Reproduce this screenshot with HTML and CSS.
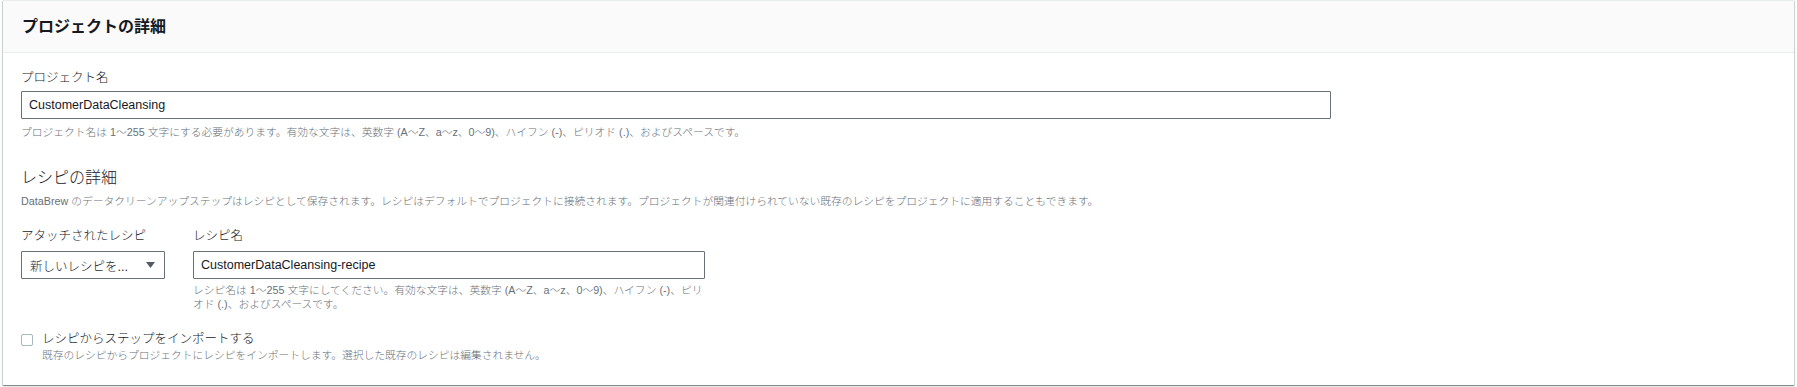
FILE: index.html
```html
<!DOCTYPE html>
<html lang="ja">
<head>
<meta charset="utf-8">
<title>プロジェクトの詳細</title>
<link rel="stylesheet" href="styles.css">
</head>
<body>
<div class="card">
  <div class="card-header">
    <h2 class="card-title">プロジェクトの詳細</h2>
  </div>
  <div class="card-body">
    <div class="field">
      <div class="label">プロジェクト名</div>
      <div class="input input-wide">CustomerDataCleansing</div>
      <div class="help">プロジェクト名は 1〜255 文字にする必要があります。有効な文字は、英数字 (A〜Z、a〜z、0〜9)、ハイフン (-)、ピリオド (.)、およびスペースです。</div>
    </div>

    <h3 class="section-title">レシピの詳細</h3>
    <div class="section-desc">DataBrew のデータクリーンアップステップはレシピとして保存されます。レシピはデフォルトでプロジェクトに接続されます。プロジェクトが関連付けられていない既存のレシピをプロジェクトに適用することもできます。</div>

    <div class="recipe-row">
      <div class="col-select">
        <div class="label">アタッチされたレシピ</div>
        <div class="select">
          <span class="select-text">新しいレシピを...</span>
          <svg class="caret" width="9" height="6" viewBox="0 0 9 6"><path d="M0 0 H9 L4.5 6 Z" fill="#545b64"/></svg>
        </div>
      </div>
      <div class="col-name">
        <div class="label">レシピ名</div>
        <div class="input">CustomerDataCleansing-recipe</div>
        <div class="help help-recipe">レシピ名は 1〜255 文字にしてください。有効な文字は、英数字 (A〜Z、a〜z、0〜9)、ハイフン (-)、ピリオド (.)、およびスペースです。</div>
      </div>
    </div>

    <div class="check">
      <span class="box"></span>
      <div class="check-text">
        <div class="check-label">レシピからステップをインポートする</div>
        <div class="check-desc">既存のレシピからプロジェクトにレシピをインポートします。選択した既存のレシピは編集されません。</div>
      </div>
    </div>
  </div>
</div>
</body>
</html>
```

FILE: styles.css
```css
* { box-sizing: border-box; }

html, body {
  margin: 0;
  padding: 0;
  background: #ffffff;
}

body {
  font-family: "Liberation Sans", "Noto Sans CJK JP", sans-serif;
  color: #16191f;
  padding: 0 3px 2px 3px;
}

.card {
  background: #ffffff;
  border-top: 1px solid #eaeded;
  box-shadow: 0 1px 1px 0 rgba(0, 28, 36, 0.3), 1px 1px 1px 0 rgba(0, 28, 36, 0.15), -1px 1px 1px 0 rgba(0, 28, 36, 0.15);
}

.card-header {
  height: 52px;
  background: #fafafa;
  border-bottom: 1px solid #eaeded;
  display: flex;
  align-items: center;
  padding: 0 19px;
}

.card-title {
  margin: 0;
  font-size: 16px;
  line-height: 20px;
  font-weight: 700;
  color: #16191f;
}

.card-body {
  padding: 16px 18px 23px 18px;
}

.label {
  font-size: 12.5px;
  line-height: 19px;
  font-weight: 300;
  color: #16191f;
}

.input {
  margin-top: 3px;
  height: 28px;
  border: 1px solid #687078;
  border-radius: 1px;
  display: flex;
  align-items: center;
  padding: 0 7px;
  font-size: 12.5px;
  font-weight: 300;
  color: #16191f;
  background: #ffffff;
}

.input-wide {
  width: 1310px;
}

.help {
  margin-top: 6px;
  font-size: 10.75px;
  line-height: 14px;
  font-weight: 300;
  color: #687078;
}

.section-title {
  margin: 29px 0 0 0;
  font-size: 16px;
  line-height: 20px;
  font-weight: 300;
  color: #16191f;
}

.section-desc {
  margin-top: 6px;
  font-size: 10.75px;
  line-height: 14px;
  font-weight: 300;
  color: #687078;
}

.recipe-row {
  margin-top: 19px;
  display: grid;
  grid-template-columns: 144px 512px;
  column-gap: 28px;
  align-items: start;
}

.col-select .select,
.col-name .input {
  margin-top: 5px;
}

.select {
  height: 28px;
  border: 1px solid #687078;
  border-radius: 1px;
  display: flex;
  align-items: center;
  justify-content: space-between;
  padding: 0 9px 0 8px;
  font-size: 12.5px;
  font-weight: 300;
  color: #16191f;
}

.select-text {
  letter-spacing: 0;
}

.caret {
  display: block;
}

.help-recipe {
  margin-top: 4px;
}

.check {
  margin-top: 20px;
  display: flex;
  align-items: flex-start;
}

.box {
  flex: none;
  width: 12px;
  height: 12px;
  margin-top: 3px;
  border: 1px solid #aab7b8;
  border-radius: 2px;
  background: #ffffff;
}

.check-text {
  margin-left: 9px;
}

.check-label {
  font-size: 12.5px;
  line-height: 17px;
  font-weight: 300;
  color: #16191f;
}

.check-desc {
  font-size: 10.75px;
  line-height: 14px;
  font-weight: 300;
  color: #687078;
}
```
